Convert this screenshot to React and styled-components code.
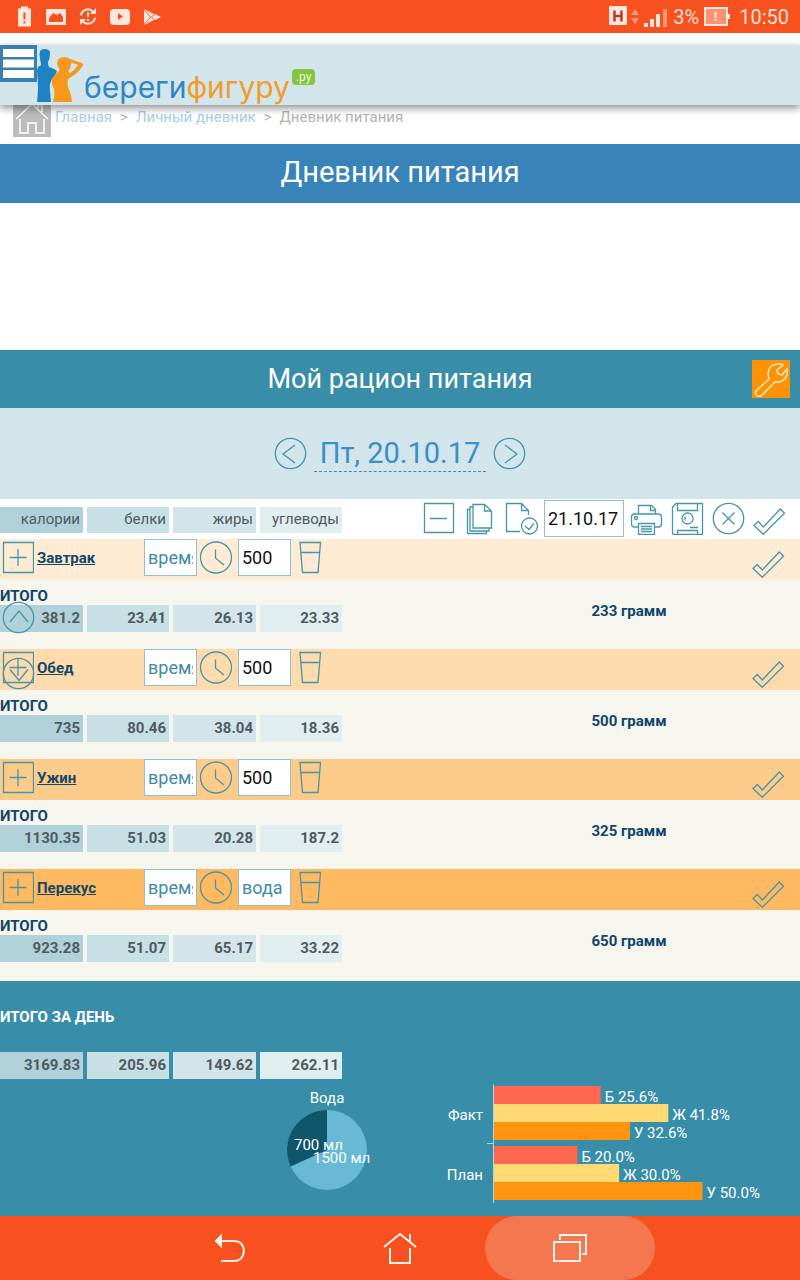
import React, { useState } from 'react';
import styled, { createGlobalStyle } from 'styled-components';

const columns = ['калории', 'белки', 'жиры', 'углеводы'];

const meals = [
    { id: 'breakfast', name: 'Завтрак', color: '#fdebd4', water: '500', weight: '233 грамм', values: ['381.2', '23.41', '26.13', '23.33'] },
    { id: 'lunch', name: 'Обед', color: '#fddbac', water: '500', weight: '500 грамм', values: ['735', '80.46', '38.04', '18.36'] },
    { id: 'dinner', name: 'Ужин', color: '#fdcb89', water: '500', weight: '325 грамм', values: ['1130.35', '51.03', '20.28', '187.2'] },
    { id: 'snack', name: 'Перекус', color: '#ffb961', water: '', weight: '650 грамм', values: ['923.28', '51.07', '65.17', '33.22'] }
];

const dayTotal = ['3169.83', '205.96', '149.62', '262.11'];

const shares = [
    { name: 'Факт', y: 7, bars: [['Б', 25.6], ['Ж', 41.8], ['У', 32.6]] },
    { name: 'План', y: 67, bars: [['Б', 20], ['Ж', 30], ['У', 50]] }
];
const barColors = ['#ff6750', '#ffd974', '#ff9410'];

const CheckIcon = () => (
    <Icon viewBox="0 0 33 33">
        <path d="M1 23.500l4.300-4 5 5.500 17-18 4.200 4.300-21.200 21z" />
    </Icon>
);

const PlusIcon = () => (
    <Icon viewBox="0 0 33 33">
        <path d="M2.500 1.500h30v30h-30zM8.500 16.500h17M17 8v17" />
    </Icon>
);

const ClockIcon = () => (
    <Icon viewBox="0 0 33 33">
        <circle cx="16" cy="16.500" r="15.500" />
        <path d="M15.500 8.500v8.500l8.500 7" />
    </Icon>
);

const GlassIcon = () => (
    <Icon viewBox="0 0 33 33">
        <path d="M6 1.500h20.500l-2.500 30H8.500zM7 11.500h18.500" />
    </Icon>
);

const CircleIcon = ({ d }) => (
    <Icon viewBox="0 0 33 33">
        <circle cx="16.500" cy="16.500" r="15.200" />
        <path d={d} />
    </Icon>
);

const StatusBar = () => (
    <Status>
        <svg width="150" height="33" viewBox="15 0 150 33" fill="#ffe6de">
            <path d="M21 6.500h7v2h3v18H18v-18h3z" />
            <path d="M23.500 12.500h2v7h-2zM23.500 21.500h2v2h-2z" fill="#f7511f" />
            <path d="M46 9h20v16H46zM49 22h14v-5l-3-4-3 2-4-2-4 5z" fillRule="evenodd" />
            <g fill="none" stroke="#ffe6de" strokeWidth="2">
                <path d="M81 15.500a7 7 0 0 1 12-4M95 17.500a7 7 0 0 1-12 4M88 12v5M88 19v2" />
            </g>
            <path d="M96 8v6h-6zM80 25v-6h6z" />
            <rect x="110" y="9" width="20" height="16" rx="4" />
            <path d="M118 13l5 3.500-5 3.500z" fill="#f7511f" />
            <path d="M144 9l10 5-3 3zM144 10l6 7-6 7zM144 25l10-5-3-3zM155 14l6 3-6 3-3-3z" />
        </svg>
        <StatusRight>
            <svg width="62" height="33" viewBox="608 0 62 33" fill="#ffe6de">
                <rect x="610" y="6" width="18" height="19" rx="1" />
                <path d="M615.500 10.500v11M622.500 10.500v11M615 16h8" stroke="#b83c1c" strokeWidth="2.500" />
                <path d="M632 15l4-6 4 6zM632 18h8l-4 6z" fill="#f99a7a" />
                <path d="M645 23h4v4h-4zM651 19h4v8h-4zM657 14h4v13h-4z" />
                <path d="M664 9h4v18h-4z" fill="#fa9474" />
            </svg>
            <span>3%</span>
            <svg width="27" height="33" viewBox="703 0 27 33">
                <rect x="705" y="8" width="22" height="17" fill="#fa9273" stroke="#ffe6de" strokeWidth="2" />
                <path d="M728 14h2v5h-2zM714.500 12h2v6h-2zM714.500 19h2v2h-2z" fill="#ffe6de" />
            </svg>
            <Clock>10:50</Clock>
        </StatusRight>
    </Status>
);

const Header = () => (
    <SiteHeader>
        <MenuButton aria-label="Меню">
            <svg width="37" height="37" viewBox="0 0 37 37">
                <path d="M0 0h37v37H0z" fill="#3a80ae" />
                <path d="M3 4h31v8H3zM3 14.500h31v8H3zM3 25h31v8H3z" fill="#fff" />
            </svg>
        </MenuButton>
        <Logo href="#">
            <svg width="47" height="60" viewBox="0 0 47 60">
                <path d="M3 6q1-2 5-2t5 3q0 7-2 10 0 4 1 5 6 2 8 4-1 4-5 8-3 5-2 12l1 11H0l1-12Q1 36 0 26l1-4q2-1 3-2 0-2-1-6-1-4 0-8z" fill="#1f82c2" />
                <path d="M20 18q1-6 7-6 3 0 6 2l12 4q2 1 0 4-5 7-14 12-1 4 0 8 3 6 4 15H16q2-8 1-13-3-6-2-9 1-4 6-8 2-1 1-4-2-2-2-5zM34 18q0 5-3 8 1 1 2 2 5-3 8-8-3-2-7-2z" fill="#f7981d" fillRule="evenodd" />
            </svg>
            <LogoText>береги<b>фигуру</b></LogoText>
            <LogoBadge>.ру</LogoBadge>
        </Logo>
    </SiteHeader>
);

const WaterChart = () => (
    <Chart width="120" height="137" viewBox="0 0 120 137">
        <circle cx="60" cy="71" r="40" fill="#68b9d4" />
        <path d="M60 71V31a40 40 0 0 0-36.400 56.600z" fill="#10566b" />
        <text x="60" y="24" textAnchor="middle">Вода</text>
        <text x="27" y="71">700 мл</text>
        <text x="46" y="84">1500 мл</text>
    </Chart>
);

const SharesChart = () => (
    <Chart width="360" height="137" viewBox="0 0 360 137">
        {shares.map(group => (
            <g key={group.name}>
                <text x="43" y={group.y + 34} textAnchor="end">{group.name}</text>
                {group.bars.map(([label, value], i) => (
                    <g key={label}>
                        <rect x="54" y={group.y + i * 18} width={value * 4.17} height="18" fill={barColors[i]} />
                        <text x={58 + value * 4.17} y={group.y + 16 + i * 18}>{`${label} ${value.toFixed(1)}%`}</text>
                    </g>
                ))}
            </g>
        ))}
        <path d="M53.500 5v119M47 64.500h6" stroke="#b5d6e0" fill="none" />
    </Chart>
);

const MealSection = ({ meal }) => {

    const [time, setTime] = useState('');
    const [water, setWater] = useState(meal.water);

    return (
        <tbody>
            <tr>
                <BandCell colSpan="5" $color={meal.color}>
                    <Band>
                        <IconButton aria-label="Добавить"><PlusIcon /></IconButton>
                        <MealLink href={`#${meal.id}`}>{meal.name}</MealLink>
                        <SmallInput aria-label="время" placeholder="время" value={time} onChange={e => setTime(e.target.value)} />
                        <IconButton aria-label="Выбрать время"><ClockIcon /></IconButton>
                        <SmallInput aria-label="вода" placeholder="вода" value={water} onChange={e => setWater(e.target.value)} />
                        <IconButton aria-label="Добавить воду"><GlassIcon /></IconButton>
                        <BandCheck aria-label="Отметить"><CheckIcon /></BandCheck>
                    </Band>
                </BandCell>
            </tr>
            <tr>
                <SumLabel colSpan="4">ИТОГО</SumLabel>
                <Weight rowSpan="2">{meal.weight}</Weight>
            </tr>
            <tr>
                {meal.values.map((value, i) => <ValueCell key={i}>{value}</ValueCell>)}
            </tr>
        </tbody>
    );
}

const Columns = () => (
    <colgroup>
        <Col $width="87px" />
        <Col $width="86px" />
        <Col $width="87px" />
        <Col $width="86px" />
        <col />
    </colgroup>
);

const App = () => {

    const [date, setDate] = useState('21.10.17');

    return (
        <Page>
            <GlobalStyle />
            <StatusBar />
            <Header />

            <Breadcrumbs>
                <a href="#home" aria-label="На главную">
                    <svg width="38" height="38" viewBox="0 0 38 38">
                        <path d="M0 0h38v38H0z" fill="#bcbcbc" />
                        <path d="M3 20L19 5l16 15M7 20v14h8V24h8v10h8V20M25 9V6h4v7" fill="none" stroke="#fff" strokeWidth="1.500" />
                    </svg>
                </a>
                <a href="#home">Главная</a>
                <span>&gt;</span>
                <a href="#diary">Личный дневник</a>
                <span>&gt;</span>
                <span>Дневник питания</span>
            </Breadcrumbs>

            <PageTitle>Дневник питания</PageTitle>

            <SectionTitle>
                <h2>Мой рацион питания</h2>
                <SettingsButton aria-label="Настройки">
                    <svg width="38" height="38" viewBox="0 0 38 38" fill="none" stroke="#ffe9c4" strokeWidth="1.500">
                        <path d="M4 31L17 19q-1-3-1-6 1-8 9-9 3-1 6 1l-6 5 1 4 4 1 5-6q1 5-1 8-4 6-11 5L9 36q-3 1-5-1-1-2 0-4z" />
                    </svg>
                </SettingsButton>
            </SectionTitle>

            <DayPicker>
                <IconButton aria-label="Предыдущий день"><CircleIcon d="M21 8l-12 9 12 9" /></IconButton>
                <DayLink href="#day">Пт, 20.10.17</DayLink>
                <IconButton aria-label="Следующий день"><CircleIcon d="M12 8l12 9-12 9" /></IconButton>
            </DayPicker>

            <Diary>
                <Table>
                    <Columns />
                    <Head>
                        <tr>
                            {columns.map(name => <HeadCell key={name}>{name}</HeadCell>)}
                            <ToolsCell>
                                <Toolbar>
                                    <IconButton aria-label="Свернуть">
                                        <Icon viewBox="0 0 33 33"><path d="M1.500 1.500h29v29h-29zM7 16.500h17" /></Icon>
                                    </IconButton>
                                    <IconButton aria-label="Копировать">
                                        <Icon viewBox="0 0 33 33">
                                            <path d="M9 2.500h11.500l7 6.500v17H9zM20.500 2.500V9h7M9 5H6v24h19v-3M6 7.500H3.500v24H22.500V29" />
                                        </Icon>
                                    </IconButton>
                                    <IconButton aria-label="Копировать на дату">
                                        <Icon viewBox="0 0 33 33">
                                            <path d="M15 29.500H1.500v-28h15l7 7V13M16.500 1.500v7h7M20 24l4 3.500 5-6" />
                                            <circle cx="24.500" cy="24" r="8" />
                                        </Icon>
                                    </IconButton>
                                    <DateInput aria-label="Дата" value={date} onChange={e => setDate(e.target.value)} />
                                    <IconButton aria-label="Печать">
                                        <Icon viewBox="0 0 33 33">
                                            <path d="M8.500 12V3.500h13l4 4V12M20.500 3.500v5h5M8 25H4.500Q1.500 25 1.500 22v-7q0-3 3-3h24q3 0 3 3v7q0 3-3 3H25M8.500 21.500h16v11h-16zM11 24.500h11M11 27h11M11 29.500h11" />
                                            <circle cx="6" cy="16" r="1.500" />
                                        </Icon>
                                    </IconButton>
                                    <IconButton aria-label="Сохранить">
                                        <Icon viewBox="0 0 33 33">
                                            <path d="M5 1.500h26.500v31H3q-1.500 0-1.500-2V5zM6.500 1.500v7h20v-7M6.500 32.500v-4h20v4M19 25.500h8M14 14.500v4" />
                                            <circle cx="16.500" cy="16.500" r="5.500" />
                                        </Icon>
                                    </IconButton>
                                    <IconButton aria-label="Удалить"><CircleIcon d="M10.500 10.500l12 12M22.500 10.500l-12 12" /></IconButton>
                                    <IconButton aria-label="Отметить все"><CheckIcon /></IconButton>
                                </Toolbar>
                            </ToolsCell>
                        </tr>
                    </Head>
                    {meals.map(meal => <MealSection key={meal.id} meal={meal} />)}
                </Table>
                <Scrollers>
                    <IconButton aria-label="Вверх"><CircleIcon d="M8 21l9-11 9 11" /></IconButton>
                    <IconButton aria-label="Вниз"><CircleIcon d="M8 12.500l9 11 9-11" /></IconButton>
                </Scrollers>
            </Diary>

            <DayTotal>
                <Table>
                    <TotalCaption>ИТОГО ЗА ДЕНЬ</TotalCaption>
                    <Columns />
                    <tbody>
                        <tr>
                            {dayTotal.map((value, i) => <TotalCell key={i}>{value}</TotalCell>)}
                            <td />
                        </tr>
                    </tbody>
                </Table>
                <Charts>
                    <WaterChart />
                    <SharesChart />
                </Charts>
            </DayTotal>

            <NavBar>
                <NavButton aria-label="Назад">
                    <svg width="34" height="34" viewBox="0 0 34 34">
                        <path d="M8 10h13q9 0 10 9.500-1 10.500-10 10.500H8" />
                        <path d="M3 10l5-5v10z" fill="#fff3ec" />
                    </svg>
                </NavButton>
                <NavButton aria-label="Домой">
                    <svg width="34" height="34" viewBox="0 0 34 34">
                        <path d="M1 16L17 3l16 13M7 17v15h20V17M27 11V3" />
                    </svg>
                </NavButton>
                <NavButton aria-label="Недавние" $active>
                    <svg width="34" height="34" viewBox="0 0 34 34">
                        <path d="M1 11h26v19H1zM7 9V4h26v19h-4" />
                    </svg>
                </NavButton>
            </NavBar>
        </Page>
    );
}

const GlobalStyle = createGlobalStyle`
    *{
        box-sizing:border-box;
    }

    body{
        margin:0;
        font-family:Roboto, sans-serif;
        font-size:15px;
        background-color:#fff;
    }

    h1, h2{
        margin:0;
        font-weight:400;
        color:#fff;
    }

    a{
        text-decoration:none;
    }

    button{
        border:0;
        padding:0;
        background:none;
        cursor:pointer;
    }

    svg{
        display:block;
        flex-shrink:0;
    }
`;

const Page = styled.div`
    display:flex;
    flex-direction:column;
    min-height:100vh;
`;

const Status = styled.div`
    display:flex;
    justify-content:space-between;
    align-items:center;
    height:33px;
    padding:0 11px 0 15px;
    margin-bottom:12px;
    background-color:#f7511f;
    color:#ffe0d5;
    font-size:20px;
`;

const StatusRight = styled.div`
    display:flex;
    align-items:center;
    gap:4px;
`;

const Clock = styled.span`
    margin-left:5px;
`;

const SiteHeader = styled.header`
    position:relative;
    z-index:1;
    display:flex;
    align-items:flex-start;
    height:60px;
    background-color:#d2e5ea;
    box-shadow:0 3px 8px rgba(0, 0, 0, 0.45);
`;

const MenuButton = styled.button`
    width:37px;
    height:37px;
`;

const Logo = styled.a`
    display:flex;
    align-items:flex-start;
`;

const LogoText = styled.span`
    padding-top:24px;
    font-family:Inter, Roboto, sans-serif;
    font-size:30px;
    line-height:36px;
    color:#2f86c1;

    b{
        font-weight:400;
        color:#f29c2c;
    }
`;

const LogoBadge = styled.span`
    margin:24px 0 0 2px;
    padding:0 4px;
    border-radius:4px;
    background-color:#86c440;
    color:#e8f6d4;
    font-size:12px;
    line-height:16px;
`;

const Breadcrumbs = styled.nav`
    display:flex;
    gap:8px;
    height:45px;
    margin-top:-6px;
    padding-left:13px;
    line-height:36px;
    color:#b4b4b4;

    a{
        color:#a9cfe6;
    }

    a:first-child{
        margin-right:-4px;
    }
`;

const PageTitle = styled.h1`
    margin-bottom:147px;
    background-color:#3884b9;
    font-size:29px;
    line-height:56px;
    padding-bottom:3px;
    text-align:center;
`;

const SectionTitle = styled.div`
    position:relative;
    background-color:#388da8;
    text-align:center;

    h2{
        font-size:27px;
        line-height:58px;
    }
`;

const SettingsButton = styled.button`
    position:absolute;
    top:10px;
    right:10px;
    background-color:#ff9305;
`;

const DayPicker = styled.div`
    display:flex;
    justify-content:center;
    align-items:center;
    gap:7px;
    height:91px;
    background-color:#d2e5ea;
`;

const DayLink = styled.a`
    padding:0 6px;
    border-bottom:1px dashed #3a8cc4;
    color:#3a8fc8;
    font-size:29px;
    line-height:36px;
`;

const Icon = styled.svg`
    width:33px;
    height:33px;
    fill:none;
    stroke:#4595ac;
    stroke-width:1.3;
`;

const IconButton = styled.button`
    flex-shrink:0;
    width:33px;
    height:33px;
`;

const Diary = styled.main`
    position:relative;
    padding-bottom:2px;
    background-color:#f6f6ee;
`;

const Table = styled.table`
    width:100%;
    table-layout:fixed;
    border-spacing:0;

    th, td{
        padding:0;
    }
`;

const Col = styled.col`
    width:${props => props.$width};
`;

const Head = styled.thead`
    background-color:#fff;
`;

/* transparent borders make the gaps between the coloured cells */
const NutrientCell = styled.td`
    && {
        padding:0 3px 2px 0;
    }
    border:0 solid transparent;
    border-right-width:4px;
    background-clip:padding-box;
    background-color:#e1eef0;
    color:#4f5a5f;
    text-align:right;
    font-weight:700;

    &:nth-child(1){
        background-color:#b0d1d9;
    }
    &:nth-child(2){
        background-color:#c7e0e5;
    }
    &:nth-child(3){
        background-color:#d3e5eb;
    }
`;

const HeadCell = styled(NutrientCell).attrs({ as: 'th' })`
    height:40px;
    border-top-width:8px;
    border-bottom-width:6px;
    font-weight:400;
`;

const ValueCell = styled(NutrientCell)`
    height:44px;
    border-bottom-width:17px;
`;

const TotalCell = styled(NutrientCell)`
    height:27px;
`;

const ToolsCell = styled.td`
    vertical-align:top;
`;

const Toolbar = styled.div`
    display:flex;
    justify-content:flex-end;
    align-items:center;
    gap:8px;
    padding:1px 14px 0 0;
`;

const Input = styled.input`
    height:37px;
    padding:0 3px;
    border:1px solid #8fc0cf;
    border-radius:0;
    background-color:#fff;
    color:#111;
    font-family:inherit;
    font-size:18px;

    &::placeholder{
        color:#3f8ba6;
        opacity:1;
    }
`;

const DateInput = styled(Input)`
    width:80px;
    margin:0 -2px;
`;

const SmallInput = styled(Input)`
    width:53px;
`;

const BandCell = styled.td`
    height:41px;
    background-color:${props => props.$color};
`;

const Band = styled.div`
    display:flex;
    align-items:center;
    gap:3px;
    height:41px;
    padding:0 15px 4px 1px;

    ${SmallInput} + ${IconButton}{
        margin-right:2px;
    }
`;

const BandCheck = styled(IconButton)`
    align-self:flex-end;
    margin:0 0 -2px auto;
`;

const MealLink = styled.a`
    width:104px;
    color:#12486a;
    font-weight:700;
    text-decoration:underline;
`;

const SumLabel = styled.th`
    height:25px;
    color:#0f456b;
    text-align:left;
    vertical-align:bottom;
`;

const Weight = styled.td`
    && {
        padding:0 0 8px 112px;
    }
    color:#0f456b;
    font-weight:700;
    text-align:center;
`;

const Scrollers = styled.div`
    position:absolute;
    top:102px;
    left:2px;
    display:flex;
    flex-direction:column;
    gap:23px;
`;

const DayTotal = styled.section`
    flex-grow:1;
    padding-top:24px;
    background-color:#388da8;
`;

const TotalCaption = styled.caption`
    padding-bottom:23px;
    color:#fff;
    font-weight:700;
    line-height:24px;
    text-align:left;
`;

const Charts = styled.div`
    display:flex;
    justify-content:flex-end;
    gap:53px;
`;

const Chart = styled.svg`
    fill:#fff;
    font-size:15px;
`;

const NavBar = styled.nav`
    display:flex;
    justify-content:center;
    height:64px;
    background-color:#f7511f;
`;

const NavButton = styled.button`
    display:flex;
    justify-content:center;
    align-items:center;
    width:170px;
    border-radius:32px;
    background-color:${props => props.$active ? '#f5774f' : 'transparent'};

    svg{
        fill:none;
        stroke:#fff3ec;
        stroke-width:2;
    }
`;

export default App;
